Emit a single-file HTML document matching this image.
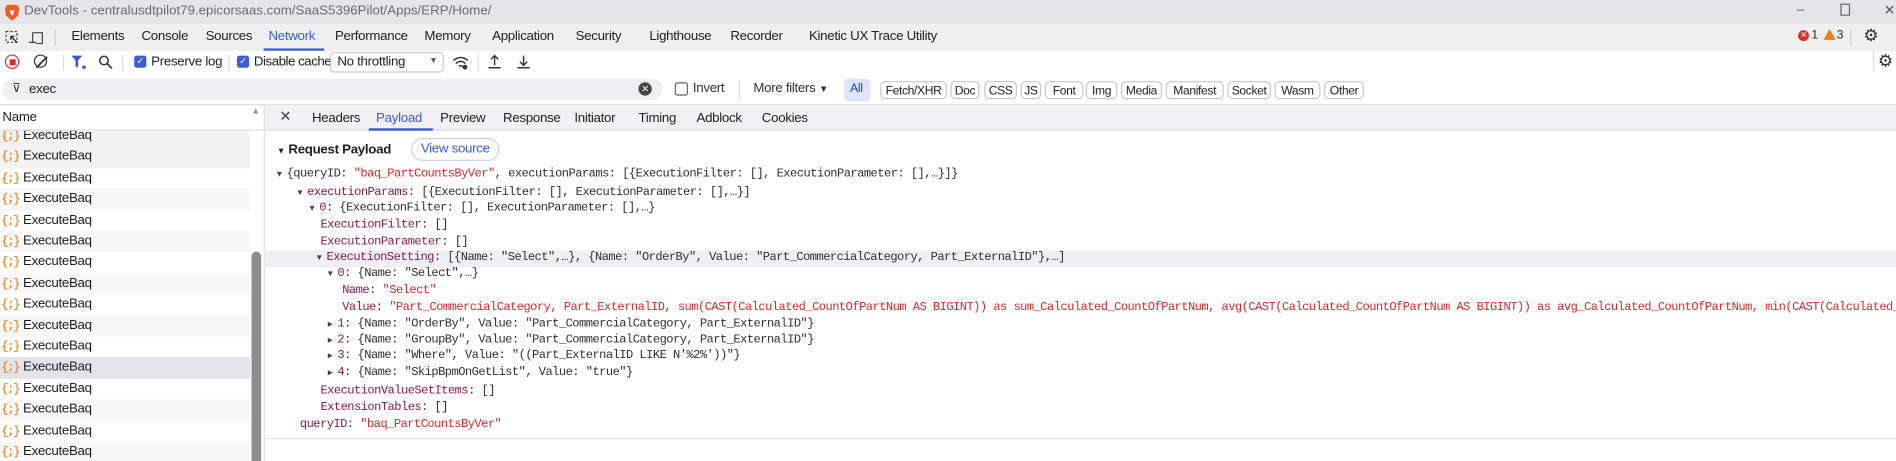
<!DOCTYPE html>
<html><head><meta charset="utf-8"><style>
html,body{margin:0;padding:0;width:1896px;height:461px;overflow:hidden;background:#fff}
#w{position:absolute;left:0;top:0;width:1568px;height:381px;transform:scale(1.2092,1.2100);transform-origin:0 0;font-family:"Liberation Sans",sans-serif;font-size:11px;color:#1f1f1f;overflow:hidden;letter-spacing:-0.25px}
.a{position:absolute;white-space:nowrap}
.tab{position:absolute;top:24px;font-size:11px;color:#1f1f1f}
.chip{position:absolute;top:67px;height:15px;line-height:15px;border:1px solid #c7c7c7;border-radius:4px;padding:0 2px;font-size:10px;background:#fff;box-sizing:border-box;text-align:center;letter-spacing:-0.3px}
.row{position:absolute;left:0;width:207px;height:17.4px;line-height:17.4px}
.row span.i{color:#e8710a;font-size:10px;margin-left:1px;margin-right:3px;font-family:"Liberation Mono",monospace;letter-spacing:-1px}
.m{position:absolute;font-family:"Liberation Mono",monospace;font-size:10px;letter-spacing:-0.45px;white-space:nowrap;color:#303030;line-height:14px}
.k{color:#8b1a52}.s{color:#d42a2a}
.ar{font-size:7px;color:#444;display:inline-block;width:8px;letter-spacing:0}
</style></head><body><div id="w">
<div class="a" style="left:0;top:0;width:1568px;height:20px;background:#e4e4e9"></div>
<svg class="a" style="left:4px;top:3px" width="12" height="14" viewBox="0 0 12 14"><path d="M2 1h8l2 3-1 6-5 4-5-4-1-6z" fill="#f25a24"/><path d="M4 5l2 1 2-1-1 4-1 1-1-1z" fill="#fff"/></svg>
<div class="a" style="left:20px;top:3px;color:#6b6b6b;font-size:11px;letter-spacing:0">DevTools - centralusdtpilot79.epicorsaas.com/SaaS5396Pilot/Apps/ERP/Home/</div>
<div class="a" style="left:1486px;top:2px;color:#555">&#8211;</div>
<div class="a" style="left:1522px;top:3px;width:6px;height:8px;border:1px solid #666"></div>
<div class="a" style="left:1558px;top:2px;color:#555">✕</div>
<div class="a" style="left:0;top:20px;width:1568px;height:22px;background:#efefef;border-bottom:1px solid #dcdcdc"></div>
<svg class="a" style="left:4px;top:25px" width="32" height="12"><rect x="1" y="1" width="9" height="9" fill="none" stroke="#444" stroke-dasharray="2 1.5"/><path d="M5 5l5 5M5 5h3M5 5v3" stroke="#222" fill="none"/><path d="M23 2h8v9h-5M23 2v8M20 10h6" stroke="#444" fill="none"/></svg>
<div class="a" style="left:45px;top:24px;width:1px;height:14px;background:#ccc"></div>
<div class="tab" style="left:59px">Elements</div>
<div class="tab" style="left:117px">Console</div>
<div class="tab" style="left:170px">Sources</div>
<div class="tab" style="left:222px;color:#3b5bdb">Network</div>
<div class="a" style="left:218px;top:40px;width:50px;height:2px;background:#3b5bdb"></div>
<div class="tab" style="left:277px">Performance</div>
<div class="tab" style="left:351px">Memory</div>
<div class="tab" style="left:407px">Application</div>
<div class="tab" style="left:476px">Security</div>
<div class="tab" style="left:537px">Lighthouse</div>
<div class="tab" style="left:604px">Recorder</div>
<div class="tab" style="left:669px">Kinetic UX Trace Utility</div>
<div class="a" style="left:1487px;top:25px;width:9px;height:9px;border-radius:50%;background:#d93025;color:#fff;font-size:7px;line-height:9px;text-align:center">✕</div>
<div class="a" style="left:1498px;top:24px;font-size:10px">1</div>
<div class="a" style="left:1508px;top:24px;width:0;height:0;border-left:5px solid transparent;border-right:5px solid transparent;border-bottom:9px solid #f07b16"></div>
<div class="a" style="left:1519px;top:24px;font-size:10px">3</div>
<div class="a" style="left:1530px;top:24px;width:1px;height:14px;background:#ccc"></div>
<div class="a" style="left:1541px;top:21px;font-size:14px;color:#333">⚙</div>
<div class="a" style="left:0;top:42px;width:1568px;height:20px;background:#fff;border-bottom:1px solid #dcdcdc"></div>
<div class="a" style="left:4px;top:45px;width:10px;height:10px;border:1.5px solid #d93025;border-radius:50%"></div>
<div class="a" style="left:8px;top:49px;width:5px;height:5px;background:#d93025"></div>
<div class="a" style="left:28px;top:45px;width:9px;height:9px;border:1.5px solid #333;border-radius:50%"></div>
<svg class="a" style="left:28px;top:45px" width="13" height="13"><path d="M2 11L11 2" stroke="#333" stroke-width="1.5"/></svg>
<div class="a" style="left:52px;top:45px;width:1px;height:14px;background:#ddd"></div>
<svg class="a" style="left:58px;top:45px" width="14" height="13"><path d="M1 1h9l-3.5 4v6l-2-1V5z" fill="#3b5bdb"/><circle cx="11.5" cy="10.5" r="1.5" fill="#3b5bdb"/></svg>
<svg class="a" style="left:81px;top:45px" width="13" height="13"><circle cx="5" cy="5" r="3.5" stroke="#333" fill="none" stroke-width="1.3"/><path d="M7.5 7.5l4 4" stroke="#333" stroke-width="1.4"/></svg>
<div class="a" style="left:101px;top:45px;width:1px;height:14px;background:#ddd"></div>
<div class="a" style="left:111px;top:46px;width:10px;height:10px;border-radius:2px;background:#3b5bdb;color:#fff;font-size:8px;line-height:10px;text-align:center">✓</div>
<div class="a" style="left:125px;top:45px">Preserve log</div>
<div class="a" style="left:189px;top:45px;width:1px;height:14px;background:#ddd"></div>
<div class="a" style="left:196px;top:46px;width:10px;height:10px;border-radius:2px;background:#3b5bdb;color:#fff;font-size:8px;line-height:10px;text-align:center">✓</div>
<div class="a" style="left:210px;top:45px;letter-spacing:-0.4px">Disable cache</div>
<div class="a" style="left:273px;top:43px;width:94px;height:17px;border:1px solid #ccc;border-radius:3px;box-sizing:border-box"></div>
<div class="a" style="left:279px;top:45px">No throttling</div>
<div class="a" style="left:355px;top:47px;font-size:7px;color:#555">▼</div>
<svg class="a" style="left:374px;top:45px" width="14" height="13"><path d="M1 5q6-5 12 0M3 7.5q4-3.5 8 0M5.5 10q1.5-1.5 3 0" stroke="#333" fill="none" stroke-width="1.2"/><circle cx="10.5" cy="10.5" r="2" fill="#333"/></svg>
<div class="a" style="left:395px;top:45px;width:1px;height:14px;background:#ddd"></div>
<svg class="a" style="left:403px;top:44px" width="40" height="14"><path d="M6 2v8M3 5l3-3 3 3M1 12h10" stroke="#333" fill="none" stroke-width="1.2"/><path d="M30 2v8M27 7l3 3 3-3M25 12h10" stroke="#333" fill="none" stroke-width="1.2"/></svg>
<div class="a" style="left:1549px;top:42px;width:1px;height:16px;background:#ddd"></div>
<div class="a" style="left:1553px;top:42px;font-size:14px;color:#333">⚙</div>
<div class="a" style="left:0;top:62px;width:1568px;height:24px;background:#fff;border-bottom:1px solid #dcdcdc"></div>
<div class="a" style="left:2px;top:65px;width:546px;height:18px;border-radius:9px;background:#efeff1"></div>
<div class="a" style="left:10px;top:68px;font-size:10px;color:#333">⊽</div>
<div class="a" style="left:24px;top:68px">exec</div>
<div class="a" style="left:528px;top:68px;width:11px;height:11px;border-radius:50%;background:#444;color:#fff;font-size:8px;line-height:11px;text-align:center">✕</div>
<div class="a" style="left:558px;top:68px;width:9px;height:9px;border:1px solid #666;border-radius:2px"></div>
<div class="a" style="left:573px;top:67px;color:#333">Invert</div>
<div class="a" style="left:611px;top:66px;width:1px;height:16px;background:#ddd"></div>
<div class="a" style="left:623px;top:67px;color:#333">More filters <span style="font-size:8px">▼</span></div>
<div class="a" style="left:698px;top:65px;width:22px;height:19px;border-radius:4px;background:#dfe3fb"></div>
<div class="a" style="left:703px;top:68px;font-size:10px;color:#1a3fd0">All</div>
<div class="chip" style="left:728px;width:55px">Fetch/XHR</div>
<div class="chip" style="left:786px;width:24px">Doc</div>
<div class="chip" style="left:814px;width:27px">CSS</div>
<div class="chip" style="left:844px;width:17px">JS</div>
<div class="chip" style="left:864px;width:32px">Font</div>
<div class="chip" style="left:898px;width:26px">Img</div>
<div class="chip" style="left:927px;width:34px">Media</div>
<div class="chip" style="left:964px;width:48px">Manifest</div>
<div class="chip" style="left:1015px;width:36px">Socket</div>
<div class="chip" style="left:1054px;width:38px">Wasm</div>
<div class="chip" style="left:1095px;width:33px">Other</div>
<div class="a" style="left:218px;top:87px;width:1px;height:294px;background:#ddd"></div>
<div class="row" style="top:104px;background:#f2f2f2"><span class="i">{;}</span>ExecuteBaq</div>
<div class="row" style="top:121.4px;background:#f2f2f2"><span class="i">{;}</span>ExecuteBaq</div>
<div class="row" style="top:138.8px"><span class="i">{;}</span>ExecuteBaq</div>
<div class="row" style="top:156.2px;background:#f7f7f7"><span class="i">{;}</span>ExecuteBaq</div>
<div class="row" style="top:173.6px"><span class="i">{;}</span>ExecuteBaq</div>
<div class="row" style="top:191px;background:#f7f7f7"><span class="i">{;}</span>ExecuteBaq</div>
<div class="row" style="top:208.4px"><span class="i">{;}</span>ExecuteBaq</div>
<div class="row" style="top:225.8px;background:#f7f7f7"><span class="i">{;}</span>ExecuteBaq</div>
<div class="row" style="top:243.2px"><span class="i">{;}</span>ExecuteBaq</div>
<div class="row" style="top:260.6px;background:#f7f7f7"><span class="i">{;}</span>ExecuteBaq</div>
<div class="row" style="top:278px"><span class="i">{;}</span>ExecuteBaq</div>
<div class="row" style="top:295.4px;background:#e4e3ec"><span class="i">{;}</span>ExecuteBaq</div>
<div class="row" style="top:312.8px"><span class="i">{;}</span>ExecuteBaq</div>
<div class="row" style="top:330.2px;background:#f7f7f7"><span class="i">{;}</span>ExecuteBaq</div>
<div class="row" style="top:347.6px"><span class="i">{;}</span>ExecuteBaq</div>
<div class="row" style="top:365px;background:#f7f7f7"><span class="i">{;}</span>ExecuteBaq</div>
<div class="a" style="left:0;top:87px;width:218px;height:20px;background:#fff;border-bottom:1px solid #ddd"></div>
<div class="a" style="left:2px;top:91px;color:#1f1f1f">Name</div>
<div class="a" style="left:208px;top:89px;font-size:7px;color:#888">▲</div>
<div class="a" style="left:208px;top:208px;width:8px;height:180px;border-radius:4px;background:#8d8d8d"></div>
<div class="a" style="left:219px;top:87px;width:1349px;height:20px;background:#f1f1f3;border-bottom:1px solid #ddd"></div>
<div class="a" style="left:231px;top:89px;font-size:12px;color:#444">✕</div>
<div class="a" style="left:258px;top:92px">Headers</div>
<div class="a" style="left:311px;top:92px;color:#3b5bdb">Payload</div>
<div class="a" style="left:305px;top:106px;width:53px;height:2px;background:#3b5bdb"></div>
<div class="a" style="left:364px;top:92px">Preview</div>
<div class="a" style="left:416px;top:92px">Response</div>
<div class="a" style="left:475px;top:92px">Initiator</div>
<div class="a" style="left:528px;top:92px">Timing</div>
<div class="a" style="left:576px;top:92px">Adblock</div>
<div class="a" style="left:630px;top:92px">Cookies</div>
<div class="a" style="left:229px;top:118px;font-weight:bold"><span style="font-size:7px;font-weight:normal">▼</span> Request Payload</div>
<div class="a" style="left:340px;top:114px;width:73px;height:19px;border:1px solid #c7cdf5;border-radius:10px;box-sizing:border-box;color:#3b5bdb;text-align:center;line-height:17px">View source</div>
<div class="a" style="left:219px;top:207px;width:1349px;height:14px;background:#efeff3"></div>
<div class="m" style="left:229px;top:138px"><span class="ar">▼</span>{queryID: <span class="s">"baq_PartCountsByVer"</span>, executionParams: [{ExecutionFilter: [], ExecutionParameter: [],…}]}</div>
<div class="m" style="left:246px;top:153px"><span class="ar">▼</span><span class="k">executionParams</span>: [{ExecutionFilter: [], ExecutionParameter: [],…}]</div>
<div class="m" style="left:256px;top:166px"><span class="ar">▼</span><span class="k">0</span>: {ExecutionFilter: [], ExecutionParameter: [],…}</div>
<div class="m" style="left:265px;top:180px"><span class="k">ExecutionFilter</span>: []</div>
<div class="m" style="left:265px;top:194px"><span class="k">ExecutionParameter</span>: []</div>
<div class="m" style="left:262px;top:207px"><span class="ar">▼</span><span class="k">ExecutionSetting</span>: [{Name: "Select",…}, {Name: "OrderBy", Value: "Part_CommercialCategory, Part_ExternalID"},…]</div>
<div class="m" style="left:271px;top:220px"><span class="ar">▼</span><span class="k">0</span>: {Name: "Select",…}</div>
<div class="m" style="left:283px;top:234px"><span class="k">Name</span>: <span class="s">"Select"</span></div>
<div class="m" style="left:283px;top:248px"><span class="k">Value</span>: <span class="s">"Part_CommercialCategory, Part_ExternalID, sum(CAST(Calculated_CountOfPartNum AS BIGINT)) as sum_Calculated_CountOfPartNum, avg(CAST(Calculated_CountOfPartNum AS BIGINT)) as avg_Calculated_CountOfPartNum, min(CAST(Calculated_CountOfPartNum AS BIGINT))</span></div>
<div class="m" style="left:271px;top:262px"><span class="ar">▶</span><span class="k">1</span>: {Name: "OrderBy", Value: "Part_CommercialCategory, Part_ExternalID"}</div>
<div class="m" style="left:271px;top:275px"><span class="ar">▶</span><span class="k">2</span>: {Name: "GroupBy", Value: "Part_CommercialCategory, Part_ExternalID"}</div>
<div class="m" style="left:271px;top:288px"><span class="ar">▶</span><span class="k">3</span>: {Name: "Where", Value: "((Part_ExternalID LIKE N'%2%'))"}</div>
<div class="m" style="left:271px;top:302px"><span class="ar">▶</span><span class="k">4</span>: {Name: "SkipBpmOnGetList", Value: "true"}</div>
<div class="m" style="left:265px;top:317px"><span class="k">ExecutionValueSetItems</span>: []</div>
<div class="m" style="left:265px;top:331px"><span class="k">ExtensionTables</span>: []</div>
<div class="m" style="left:248px;top:345px"><span class="k">queryID</span>: <span class="s">"baq_PartCountsByVer"</span></div>
<div class="a" style="left:219px;top:362px;width:1349px;height:1px;background:#e3e3e3"></div>
</div></body></html>
